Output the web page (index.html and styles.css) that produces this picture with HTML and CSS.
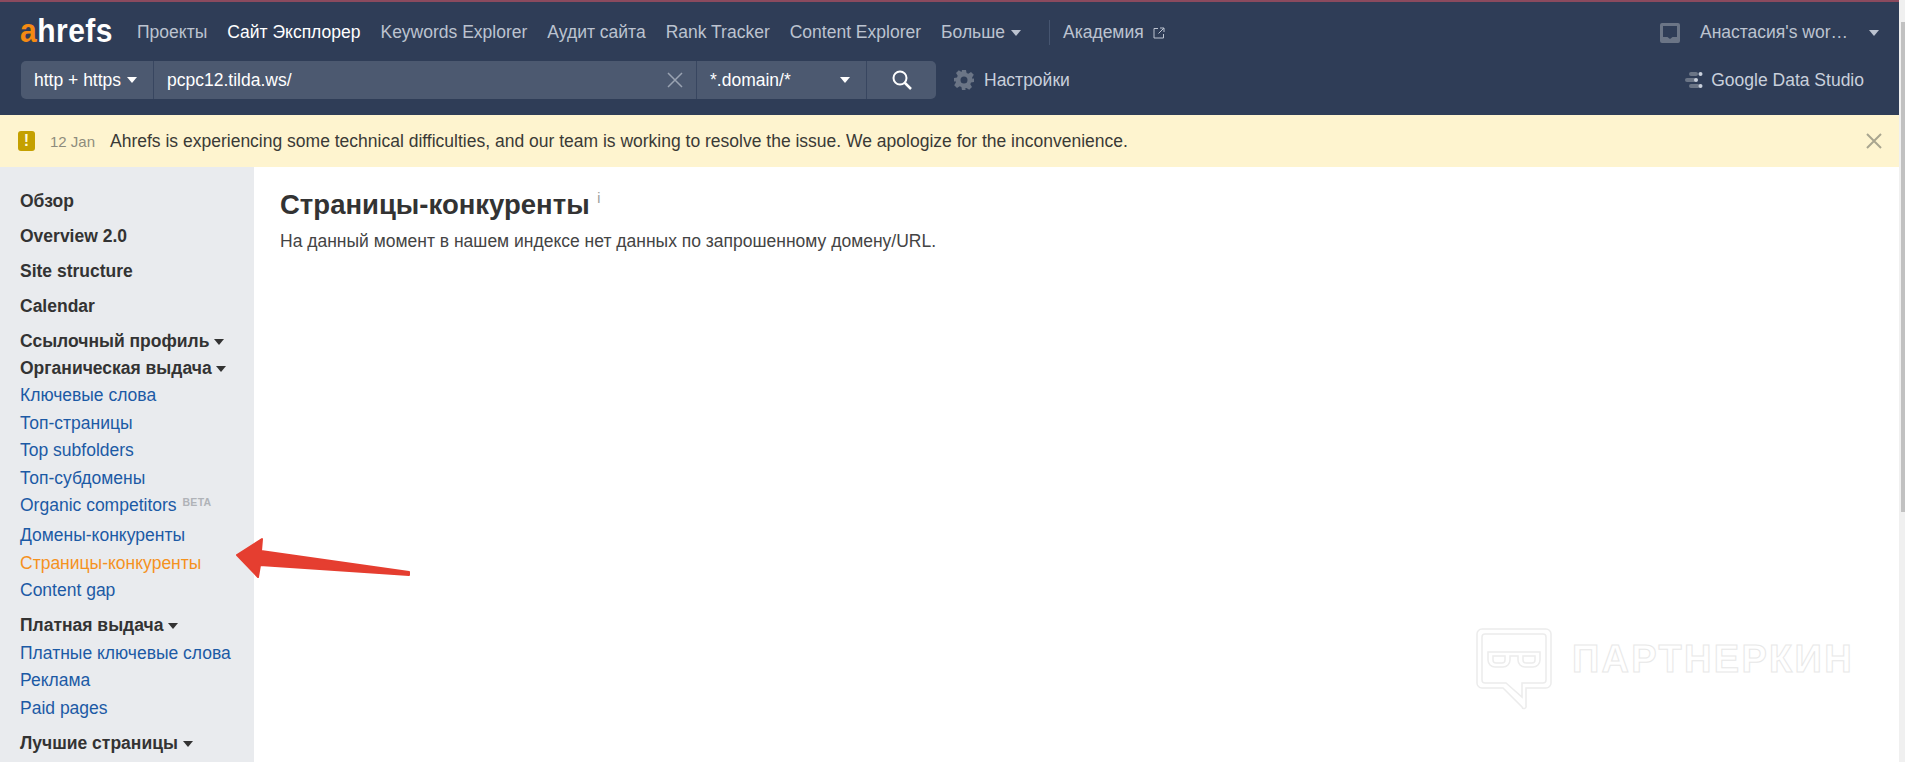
FILE: index.html
```html
<!DOCTYPE html>
<html lang="ru">
<head>
<meta charset="utf-8">
<title>Ahrefs</title>
<link rel="stylesheet" href="styles.css">
</head>
<body>
<div class="page">
  <header class="header">
    <div class="toprow">
      <div class="logo"><span class="logo-a">a</span>hrefs</div>
      <nav class="nav">
        <a class="nav-item">Проекты</a>
        <a class="nav-item active">Сайт Эксплорер</a>
        <a class="nav-item">Keywords Explorer</a>
        <a class="nav-item">Аудит сайта</a>
        <a class="nav-item">Rank Tracker</a>
        <a class="nav-item">Content Explorer</a>
        <a class="nav-item">Больше <i class="caret caret-nav"></i></a>
        <span class="nav-sep"></span>
        <a class="nav-item">Академия
          <svg class="ext" width="12" height="12" viewBox="0 0 12 12"><path d="M5 1.500H1v9.500h9.500V7M7 1h4v4M11 1L5.500 6.500" fill="none" stroke="#bcc3d0" stroke-width="1"/></svg>
        </a>
      </nav>
      <div class="account">
        <svg width="20" height="20" viewBox="0 0 20 20"><path d="M2 0h16a2 2 0 0 1 2 2v16a2 2 0 0 1-2 2H2a2 2 0 0 1-2-2V2a2 2 0 0 1 2-2zM3 3v11h4.500l2.500 2 2.500-2H17V3z" fill="#6b7586" fill-rule="evenodd"/></svg>
        <span class="account-name">Анастасия's wor…</span>
        <i class="caret caret-account"></i>
      </div>
    </div>
    <div class="searchrow">
      <div class="search">
        <div class="seg seg-proto">http + https <i class="caret caret-white"></i></div>
        <div class="seg seg-url"><span>pcpc12.tilda.ws/</span>
          <svg width="16" height="16" viewBox="0 0 16 16"><path d="M1 1l14 14M15 1L1 15" stroke="#9aa3b2" stroke-width="1.500" fill="none"/></svg>
        </div>
        <div class="seg seg-mode"><span>*.domain/*</span><i class="caret caret-white"></i></div>
        <div class="seg seg-go">
          <svg width="22" height="22" viewBox="0 0 22 22"><circle cx="9" cy="9" r="6.500" fill="none" stroke="#fff" stroke-width="2"/><path d="M13.500 13.500L20 20" stroke="#fff" stroke-width="2.500"/></svg>
        </div>
      </div>
      <div class="settings">
        <svg width="20" height="20" viewBox="0 0 20 20"><path fill="#6b7586" fill-rule="evenodd" d="M8 0h4l.6 3 1.700.7L17 2l2.800 2.800-1.700 2.700.7 1.700L20 8v4l-3 .6-.7 1.700 1.700 2.700-2.800 2.800-2.700-1.700-1.700.7L12 20H8l-.6-3-1.700-.7L3 18l-2.800-2.800 1.700-2.700-.7-1.700L0 12V8l3-.6.7-1.700L2 3 4.800.2l2.700 1.700zM10 6.500a3.500 3.500 0 1 0 0 7 3.500 3.500 0 0 0 0-7z"/></svg>
        <span>Настройки</span>
      </div>
      <div class="gds">
        <svg width="18" height="18" viewBox="0 0 18 18"><rect x="4" y="1" width="9" height="4" rx="2" fill="#6b7586"/><circle cx="15.500" cy="3" r="2" fill="#c9d0dc"/><rect x="0" y="7" width="11" height="4" rx="2" fill="#6b7586"/><circle cx="11" cy="9" r="2" fill="#c9d0dc"/><rect x="4" y="13" width="11" height="4" rx="2" fill="#6b7586"/><circle cx="15.500" cy="15" r="2" fill="#c9d0dc"/></svg>
        <span>Google Data Studio</span>
      </div>
    </div>
  </header>
  <div class="banner">
    <span class="warn">!</span>
    <span class="banner-date">12 Jan</span>
    <span class="banner-text">Ahrefs is experiencing some technical difficulties, and our team is working to resolve the issue. We apologize for the inconvenience.</span>
    <svg class="banner-close" width="16" height="16" viewBox="0 0 16 16"><path d="M1 1l14 14M15 1L1 15" stroke="#a9a58f" stroke-width="2" fill="none"/></svg>
  </div>
  <div class="body">
    <aside class="sidebar">
      <a class="side-main">Обзор</a>
      <a class="side-main">Overview 2.0</a>
      <a class="side-main">Site structure</a>
      <a class="side-main">Calendar</a>
      <a class="side-head">Ссылочный профиль <i class="caret caret-dark"></i></a>
      <a class="side-head tall">Органическая выдача <i class="caret caret-dark"></i></a>
      <a class="side-link">Ключевые слова</a>
      <a class="side-link">Топ-страницы</a>
      <a class="side-link">Top subfolders</a>
      <a class="side-link">Топ-субдомены</a>
      <a class="side-link wide">Organic competitors <sup class="beta">BETA</sup></a>
      <a class="side-link mid">Домены-конкуренты</a>
      <a class="side-link current">Страницы-конкуренты</a>
      <a class="side-link">Content gap</a>
      <a class="side-head gap">Платная выдача <i class="caret caret-dark"></i></a>
      <a class="side-link">Платные ключевые слова</a>
      <a class="side-link">Реклама</a>
      <a class="side-link">Paid pages</a>
      <a class="side-head gap last">Лучшие страницы <i class="caret caret-dark"></i></a>
    </aside>
    <main class="content">
      <h1 class="title">Страницы-конкуренты <sup class="info">i</sup></h1>
      <p class="note">На данный момент в нашем индексе нет данных по запрошенному домену/URL.</p>
    </main>
  </div>
  <svg class="arrow" width="180" height="50" viewBox="0 0 180 50"><path d="M5 21L30 5l-1 12 148 21v3L28 31l-2 12z" fill="#e53e30" stroke="#e53e30" stroke-width="2" stroke-linejoin="round"/></svg>
  <div class="watermark">
    <svg width="76" height="82" viewBox="0 0 76 82"><g fill="none" stroke="#ececec" stroke-width="1.500"><path d="M6 1h64a5 5 0 0 1 5 5v49a5 5 0 0 1-5 5H50v18a2 2 0 0 1-4 1L27 60H6a5 5 0 0 1-5-5V6a5 5 0 0 1 5-5z"/><path d="M9 6h58a3 3 0 0 1 3 3v43a3 3 0 0 1-3 3H46v14L30 55H9a3 3 0 0 1-3-3V9a3 3 0 0 1 3-3z"/><path d="M12 24h52v8a7 7 0 0 1-7 7h-8a7 7 0 0 1-7-7v-4h-8v4a7 7 0 0 1-7 7h-8a7 7 0 0 1-7-7z"/><path d="M17 28h12v4a3 3 0 0 1-3 3h-6a3 3 0 0 1-3-3zM47 28h12v4a3 3 0 0 1-3 3h-6a3 3 0 0 1-3-3z"/></g></svg>
    <span class="wm-text">ПАРТНЕРКИН</span>
  </div>
  <div class="scrollbar"><div class="thumb"></div></div>
</div>
</body>
</html>
```
FILE: styles.css
```css
* { box-sizing: border-box; }
html, body { margin: 0; padding: 0; height: 100%; overflow: hidden; }
body { font-family: "Liberation Sans", Arial, sans-serif; background: #fff; color: #333; }
.page { position: relative; width: 1905px; height: 762px; overflow: hidden; }
.header { height: 115px; background: #2f3d57; border-top: 2px solid #8b4a5e; margin-right: 6px; }
.toprow { display: flex; align-items: center; height: 59px; padding-left: 20px; padding-right: 20px; }
.logo { font-weight: 700; font-size: 30px; line-height: 34px; color: #fff; width: 95px; letter-spacing: .5px; transform: scaleY(1.12); transform-origin: left 70%; }
.logo-a { color: #f58a12; }
.nav { display: flex; align-items: center; margin-left: 22px; padding-top: 2px; font-size: 17.500px; color: #bcc3d0; flex: 1; }
.nav-item { margin-right: 20px; white-space: nowrap; display: flex; align-items: center; gap: 6px; }
.nav-item.active { color: #fff; }
.nav-sep { width: 1px; height: 25px; background: #465570; margin-right: 13px; margin-left: 8px; }
.ext { margin-left: 3px; }
.caret { display: inline-block; width: 0; height: 0; border-left: 5px solid transparent; border-right: 5px solid transparent; border-top: 6px solid #bcc3d0; }
.caret-white { border-top-color: #fff; }
.caret-dark { border-top-color: #333; }
.account { display: flex; align-items: center; padding-top: 2px; font-size: 17.500px; color: #bcc3d0; }
.account-name { margin-left: 20px; margin-right: 21px; }
.searchrow { display: flex; align-items: center; height: 38px; padding-left: 21px; padding-right: 35px; }
.search { display: flex; height: 38px; width: 915px; font-size: 17.500px; color: #fff; }
.seg { background: #4c5970; display: flex; align-items: center; height: 100%; }
.seg-proto { width: 133px; padding-left: 13px; border-right: 1px solid #384660; gap: 6px; border-radius: 5px 0 0 5px; white-space: nowrap; }
.seg-url { flex: 1; padding-left: 13px; padding-right: 13px; justify-content: space-between; border-right: 1px solid #384660; }
.seg-mode { width: 170px; padding: 0 16px 0 13px; justify-content: space-between; border-right: 1px solid #384660; }
.seg-go { width: 69px; justify-content: center; border-radius: 0 5px 5px 0; }
.settings { display: flex; align-items: center; gap: 10px; margin-left: 18px; font-size: 17.500px; color: #c9d0dc; flex: 1; }
.gds { display: flex; align-items: center; gap: 8px; font-size: 17.500px; color: #c9d0dc; }
.banner { height: 52px; background: #fef4cf; display: flex; align-items: center; padding-left: 18px; padding-right: 17px; margin-right: 6px; font-size: 17.500px; }
.warn { width: 17px; height: 20px; background: #c4a000; color: #fff8d8; border-radius: 3px; font-weight: 700; font-size: 16px; display: flex; align-items: center; justify-content: center; }
.banner-date { margin-left: 15px; font-size: 15px; color: #8e8c7d; }
.banner-text { margin-left: 15px; color: #3a3a36; flex: 1; }
.body { display: flex; height: 595px; margin-right: 6px; }
.sidebar { width: 254px; background: #e9ebee; padding-top: 25px; display: flex; flex-direction: column; font-size: 17.500px; }
.side-main { padding-left: 20px; height: 35px; line-height: 18px; font-weight: 700; color: #333; }
.side-head { padding-left: 20px; height: 27px; line-height: 18px; font-weight: 700; color: #333; white-space: nowrap; }
.side-head.tall { height: 28px; }
.side-head.gap { margin-top: 7px; height: 28px; }
.side-head.gap.last { margin-top: 8px; }
.side-link { padding-left: 20px; height: 27.500px; line-height: 18px; color: #1c5aa5; white-space: nowrap; }
.side-link.wide { height: 29.500px; }
.side-link.mid { height: 28.500px; }
.side-link.current { color: #f5921e; }
.side-head .caret { vertical-align: 2px; }
.beta { font-size: 10.500px; color: #b0b3b8; font-weight: 700; letter-spacing: .3px; vertical-align: 5px; line-height: 0; margin-left: 1px; }
.content { flex: 1; padding: 23px 26px; }
.title { margin: 0; font-size: 27.500px; line-height: 30px; font-weight: 700; color: #333; }
.info { font-size: 14px; font-weight: 400; color: #999; vertical-align: 11px; line-height: 0; }
.note { margin: 11px 0 0; font-size: 17.500px; line-height: 20px; color: #444; }
.arrow { position: absolute; left: 232px; top: 534px; }
.watermark { position: absolute; left: 1476px; top: 628px; display: flex; align-items: flex-start; gap: 20px; }
.wm-text { font-size: 38px; line-height: 38px; margin-top: 12px; color: #fff; -webkit-text-stroke: 1px #e8e8e8; font-weight: 700; letter-spacing: 2.300px; white-space: nowrap; }
.scrollbar { position: absolute; right: 0; top: 0; width: 6px; height: 762px; background: #f0f0f0; }
.thumb { position: absolute; right: 0; top: 22px; width: 4px; height: 490px; background: #c1c1c1; }
```
